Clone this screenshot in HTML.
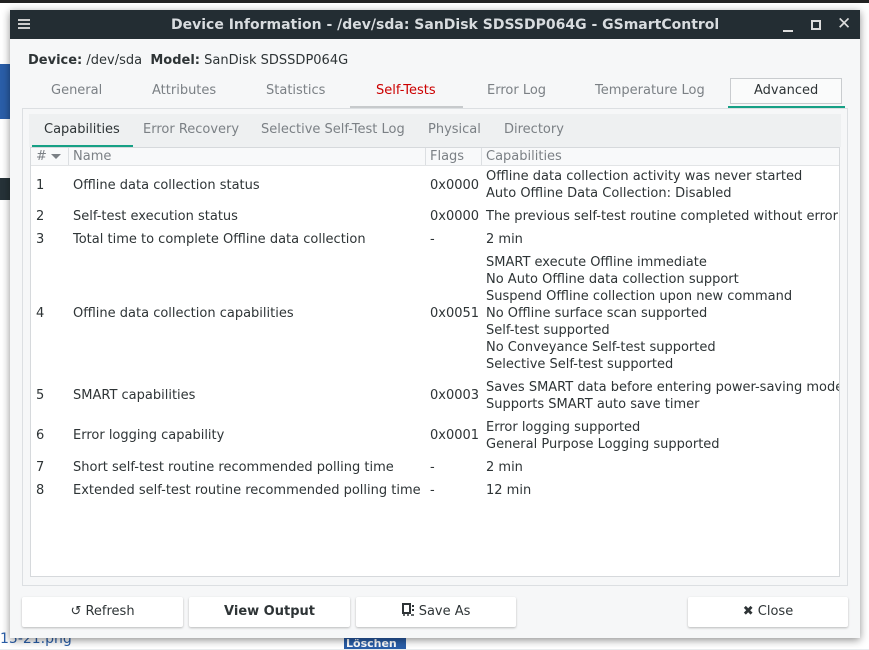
<!DOCTYPE html>
<html><head><meta charset="utf-8"><style>
*{margin:0;padding:0;box-sizing:border-box}
body{width:869px;height:649px;overflow:hidden;background:#e9ecef;font-family:"DejaVu Sans","Liberation Sans",sans-serif;font-size:13px;color:#2e3436;position:relative}
.a{position:absolute;white-space:nowrap}
.g{color:#7b8085}
</style></head><body>
<div class="a" style="left:0;top:0;width:869px;height:649px;background:#fff"></div>
<div class="a" style="left:0;top:0;width:869px;height:3px;background:#222"></div>
<div class="a" style="left:0;top:64px;width:12px;height:55px;background:#2a5ea8"></div>
<div class="a" style="left:0;top:178px;width:12px;height:22px;background:#263238"></div>
<div class="a" style="left:0;top:631px;color:#2a5ea8;font-size:14px">15-21.png</div>
<div class="a" style="left:344px;top:638px;width:62px;height:11px;background:#2a5ea8"></div>
<div class="a" style="left:346px;top:637px;color:#fff;font-size:11px;font-weight:bold">Löschen</div>
<div class="a" style="left:10px;top:10px;width:850px;height:628px;background:#f6f7f8;box-shadow:0 2px 8px rgba(0,0,0,.45)"></div>
<div class="a" style="left:10px;top:10px;width:850px;height:29px;background:#232d33"></div>
<div class="a" style="left:18px;top:19px;width:12px;height:2px;background:#ccc;box-shadow:0 4px 0 #ccc,0 8px 0 #ccc"></div>
<div class="a" style="left:171px;top:17px;color:#d8dcdf;font-weight:bold;font-size:14px">Device Information - /dev/sda: SanDisk SDSSDP064G - GSmartControl</div>
<div class="a" style="left:783px;top:30px;width:10px;height:2px;background:#ddd"></div>
<div class="a" style="left:811px;top:20px;width:10px;height:10px;border:2px solid #ddd"></div>
<div class="a" style="left:837px;top:14px;color:#ddd;font-size:17px">✕</div>
<div class="a" style="left:28px;top:53px"><b>Device:</b> /dev/sda &nbsp;<b>Model:</b> SanDisk SDSSDP064G</div>
<div class="a g" style="left:51px;top:83px">General</div>
<div class="a g" style="left:152px;top:83px">Attributes</div>
<div class="a g" style="left:266px;top:83px">Statistics</div>
<div class="a" style="left:376px;top:83px;color:#cc0000">Self-Tests</div>
<div class="a g" style="left:487px;top:83px">Error Log</div>
<div class="a g" style="left:595px;top:83px">Temperature Log</div>
<div class="a" style="left:730px;top:78px;width:112px;height:26px;border:1px solid #c9cccf;background:#fafbfb"></div>
<div class="a" style="left:754px;top:83px">Advanced</div>
<div class="a" style="left:350px;top:106px;width:113px;height:2px;background:#c7cacc"></div>
<div class="a" style="left:728px;top:106px;width:117px;height:2px;background:#16a085"></div>
<div class="a" style="left:22px;top:108px;width:826px;height:478px;border:1px solid #dcdfe2;background:#f6f7f8"></div>
<div class="a" style="left:29px;top:114px;width:812px;height:33px;background:#eef0f1"></div>
<div class="a" style="left:44px;top:122px">Capabilities</div>
<div class="a g" style="left:143px;top:122px">Error Recovery</div>
<div class="a g" style="left:261px;top:122px">Selective Self-Test Log</div>
<div class="a g" style="left:428px;top:122px">Physical</div>
<div class="a g" style="left:504px;top:122px">Directory</div>
<div class="a" style="left:32px;top:145px;width:101px;height:2px;background:#16a085"></div>
<div class="a" style="left:30px;top:147px;width:810px;height:430px;border:1px solid #d6d9dc;background:#fff;overflow:hidden">
<div class="a" style="left:0;top:0;width:808px;height:18px;background:#f8f9fa;border-bottom:1px solid #e2e4e6"></div>
<div class="a" style="left:37px;top:0;width:1px;height:17px;background:#dcdfe2"></div>
<div class="a" style="left:394px;top:0;width:1px;height:17px;background:#dcdfe2"></div>
<div class="a" style="left:450px;top:0;width:1px;height:17px;background:#dcdfe2"></div>
<div class="a g" style="left:5px;top:1px">#</div>
<div class="a" style="left:20px;top:6px;border-left:5px solid transparent;border-right:5px solid transparent;border-top:5px solid #7b8085"></div>
<div class="a g" style="left:42px;top:1px">Name</div>
<div class="a g" style="left:399px;top:1px">Flags</div>
<div class="a g" style="left:455px;top:1px">Capabilities</div>
<div class="a" style="left:1px;top:20px;width:806px;height:360px;line-height:17px">
<div class="a" style="left:4px;top:9px">1</div><div class="a" style="left:41px;top:9px">Offline data collection status</div><div class="a" style="left:398px;top:9px">0x0000</div><div class="a" style="left:454px;top:0">Offline data collection activity was never started<br>Auto Offline Data Collection: Disabled</div>
<div class="a" style="left:4px;top:40px">2</div><div class="a" style="left:41px;top:40px">Self-test execution status</div><div class="a" style="left:398px;top:40px">0x0000</div><div class="a" style="left:454px;top:40px">The previous self-test routine completed without error</div>
<div class="a" style="left:4px;top:63px">3</div><div class="a" style="left:41px;top:63px">Total time to complete Offline data collection</div><div class="a" style="left:398px;top:63px">-</div><div class="a" style="left:454px;top:63px">2 min</div>
<div class="a" style="left:4px;top:137px">4</div><div class="a" style="left:41px;top:137px">Offline data collection capabilities</div><div class="a" style="left:398px;top:137px">0x0051</div><div class="a" style="left:454px;top:86px">SMART execute Offline immediate<br>No Auto Offline data collection support<br>Suspend Offline collection upon new command<br>No Offline surface scan supported<br>Self-test supported<br>No Conveyance Self-test supported<br>Selective Self-test supported</div>
<div class="a" style="left:4px;top:219px">5</div><div class="a" style="left:41px;top:219px">SMART capabilities</div><div class="a" style="left:398px;top:219px">0x0003</div><div class="a" style="left:454px;top:211px">Saves SMART data before entering power-saving mode<br>Supports SMART auto save timer</div>
<div class="a" style="left:4px;top:259px">6</div><div class="a" style="left:41px;top:259px">Error logging capability</div><div class="a" style="left:398px;top:259px">0x0001</div><div class="a" style="left:454px;top:251px">Error logging supported<br>General Purpose Logging supported</div>
<div class="a" style="left:4px;top:291px">7</div><div class="a" style="left:41px;top:291px">Short self-test routine recommended polling time</div><div class="a" style="left:398px;top:291px">-</div><div class="a" style="left:454px;top:291px">2 min</div>
<div class="a" style="left:4px;top:314px">8</div><div class="a" style="left:41px;top:314px">Extended self-test routine recommended polling time</div><div class="a" style="left:398px;top:314px">-</div><div class="a" style="left:454px;top:314px">12 min</div>
</div>
</div>
<div class="a" style="left:22px;top:597px;width:161px;height:30px;background:#fff;border-radius:2px;box-shadow:0 1px 2px rgba(0,0,0,.25);text-align:center;line-height:29px">↺ Refresh</div>
<div class="a" style="left:189px;top:597px;width:161px;height:30px;background:#fff;border-radius:2px;box-shadow:0 1px 2px rgba(0,0,0,.25);text-align:center;line-height:29px;font-weight:bold">View Output</div>
<div class="a" style="left:356px;top:597px;width:160px;height:30px;background:#fff;border-radius:2px;box-shadow:0 1px 2px rgba(0,0,0,.25);text-align:center;line-height:29px"><svg width="13" height="14" viewBox="0 0 13 14" style="vertical-align:-2px"><rect x="1" y="1" width="7" height="9" fill="none" stroke="#2e3436" stroke-width="2"/><rect x="10" y="2" width="2" height="2" fill="#2e3436"/><rect x="10" y="6" width="2" height="2" fill="#2e3436"/><path d="M1 12h2M5 12h2M9 12h3" stroke="#2e3436" stroke-width="1.5"/></svg> Save As</div>
<div class="a" style="left:688px;top:597px;width:160px;height:30px;background:#fff;border-radius:2px;box-shadow:0 1px 2px rgba(0,0,0,.25);text-align:center;line-height:29px">✖ Close</div>
</body></html>
